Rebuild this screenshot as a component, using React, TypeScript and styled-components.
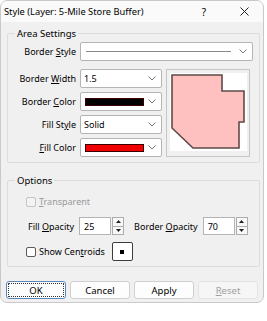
import React from "react";
import styled, { createGlobalStyle } from "styled-components";

const GlobalStyle = createGlobalStyle`
  html, body {
    margin: 0;
    background: #ffffff;
  }
  body {
    font-family: "Noto Sans", "DejaVu Sans", sans-serif;
    font-size: 9px;
    color: #000;
  }
`;

const Window = styled.div`
  width: 264px;
  height: 303px;
  box-sizing: border-box;
  border: 1px solid #c9c9c9;
  border-radius: 7px;
  overflow: hidden;
  background: #f0f0f0;
  display: flex;
  flex-direction: column;
`;

const TitleBar = styled.div`
  height: 21px;
  flex: none;
  background: #fafafa;
  display: flex;
  align-items: center;
  padding-left: 3px;
`;

const Title = styled.div`
  flex: 1;
  white-space: nowrap;
  font-size: 9.3px;
`;

const Help = styled.div`
  width: 12px;
  text-align: center;
  margin-right: 28px;
  font-size: 10px;
`;

const Close = styled.div`
  width: 12px;
  margin-right: 13px;
  display: flex;
  align-items: center;
  justify-content: center;
`;

const Body = styled.div`
  padding: 5px 3px 0 6px;
  display: flex;
  flex-direction: column;
`;

const Group = styled.fieldset<{ $gap?: number }>`
  margin: 0 0 ${(p) => p.$gap ?? 0}px 0;
  border: 1px solid #dcdcdc;
  border-radius: 2px;
  padding: 2px 6px 5px 4px;
  min-width: 0;

  legend {
    padding: 0 2px;
    margin-left: 3px;
    line-height: 13px;
    font-size: 9.5px;
  }
`;

const Row = styled.div`
  display: flex;
  align-items: center;
  height: 19px;
`;

const Label = styled.div`
  width: 64px;
  margin-right: 4px;
  text-align: right;
  white-space: nowrap;
`;

const Grid = styled.div`
  display: grid;
  grid-template-columns: 64px 82px 84px;
  grid-auto-rows: 19px;
  column-gap: 4px;
  row-gap: 4px;
  margin-top: 8px;
  align-items: center;
`;

const Combo = styled.div<{ $wide?: boolean }>`
  height: 19px;
  box-sizing: border-box;
  width: ${(p) => (p.$wide ? "173px" : "82px")};
  border: 1px solid #b4b4b4;
  border-radius: 2px;
  background: #fff;
  display: flex;
  align-items: center;
  padding: 0 5px 0 3px;
  gap: 4px;
`;

const ComboValue = styled.div`
  flex: 1;
  display: flex;
  align-items: center;
  white-space: nowrap;
`;

const LineSample = styled.div`
  flex: 1;
  height: 1px;
  background: #8a8a8a;
  margin-left: 2px;
  margin-right: 4px;
`;

const Swatch = styled.div<{ $color: string }>`
  width: 59px;
  height: 8px;
  margin-left: 1px;
  background: ${(p) => p.$color};
  border: 1px solid #3a0000;
  box-sizing: border-box;
`;

const Preview = styled.div`
  grid-column: 3;
  grid-row: 1 / span 4;
  align-self: stretch;
  box-sizing: border-box;
  border: 1px solid #c6c6c6;
  background: #f0f0f0;
  padding: 3px 3px 5px 3px;
  display: flex;
`;

const PreviewCanvas = styled.div`
  flex: 1;
  background: #fff;
  display: flex;
`;

const OptRow = styled.div<{ $top: number; $h: number }>`
  display: flex;
  align-items: center;
  height: ${(p) => p.$h}px;
  margin-top: ${(p) => p.$top}px;
  padding-left: 14px;
`;

const Check = styled.div<{ $disabled?: boolean }>`
  width: 10px;
  height: 10px;
  box-sizing: border-box;
  border: 1px solid ${(p) => (p.$disabled ? "#c4c4c4" : "#5a5a5a")};
  border-radius: 2px;
  background: ${(p) => (p.$disabled ? "#f3f3f3" : "#fff")};
  margin-right: 3px;
`;

const Text = styled.span<{ $disabled?: boolean; $ml?: number }>`
  color: ${(p) => (p.$disabled ? "#9a9a9a" : "#000")};
  margin-left: ${(p) => p.$ml ?? 0}px;
  white-space: nowrap;
`;

const SpinInput = styled.div<{ $ml: number }>`
  width: 32px;
  height: 18px;
  box-sizing: border-box;
  border: 1px solid #b4b4b4;
  background: #fff;
  margin-left: ${(p) => p.$ml}px;
  display: flex;
  align-items: center;
  padding-left: 4px;
`;

const Spinner = styled.div`
  width: 12px;
  height: 18px;
  box-sizing: border-box;
  margin-left: 1px;
  border: 1px solid #adadad;
  background: #f8f8f8;
  display: flex;
  flex-direction: column;
`;

const SpinHalf = styled.div<{ $down?: boolean }>`
  flex: 1;
  display: flex;
  align-items: center;
  justify-content: center;
  border-top: ${(p) => (p.$down ? "1px solid #adadad" : "none")};
`;

const SymbolButton = styled.div`
  width: 21px;
  height: 19px;
  box-sizing: border-box;
  margin-left: 7px;
  border: 1px solid #3c3c3c;
  border-radius: 2px;
  background: #fff;
  display: flex;
  align-items: center;
  justify-content: center;
`;

const Dot = styled.div`
  width: 4px;
  height: 4px;
  background: #000;
`;

const ButtonRow = styled.div`
  display: flex;
  gap: 4px;
  margin-top: 14px;
  margin-left: -1px;
`;

const Button = styled.div<{ $focused?: boolean; $disabled?: boolean }>`
  width: 60px;
  height: 18px;
  box-sizing: border-box;
  border: 1px solid ${(p) => (p.$focused ? "#5b86b8" : p.$disabled ? "#e4e4e4" : "#d0d0d0")};
  border-radius: 3px;
  background: ${(p) => (p.$disabled ? "#f6f6f6" : "#fdfdfd")};
  color: ${(p) => (p.$disabled ? "#a0a0a0" : "#000")};
  font-size: 9.5px;
  display: flex;
  align-items: center;
  justify-content: center;
  position: relative;

  ${(p) =>
    p.$focused &&
    `&::after {
      content: "";
      position: absolute;
      inset: 1px;
      border: 1px dotted #333;
      border-radius: 1px;
    }`}
`;

const Chevron = () => (
  <svg width="8" height="5" viewBox="0 0 8 5">
    <polyline points="0.5,0.5 4,4 7.5,0.5" fill="none" stroke="#777" strokeWidth="1" />
  </svg>
);

const Arrow = ({ down }: { down?: boolean }) => (
  <svg width="5" height="3" viewBox="0 0 5 3">
    <polygon points={down ? "0,0 5,0 2.5,3" : "0,3 5,3 2.5,0"} fill="#222" />
  </svg>
);

function ComboBox({ wide, children }: { wide?: boolean; children?: React.ReactNode }) {
  return (
    <Combo $wide={wide}>
      <ComboValue>{children}</ComboValue>
      <Chevron />
    </Combo>
  );
}

function Spin({ value, ml }: { value: string; ml: number }) {
  return (
    <>
      <SpinInput $ml={ml}>{value}</SpinInput>
      <Spinner>
        <SpinHalf>
          <Arrow />
        </SpinHalf>
        <SpinHalf $down>
          <Arrow down />
        </SpinHalf>
      </Spinner>
    </>
  );
}

export default function App() {
  return (
    <>
      <GlobalStyle />
      <Window>
        <TitleBar>
          <Title>Style (Layer: 5-Mile Store Buffer)</Title>
          <Help>?</Help>
          <Close>
            <svg width="9" height="9" viewBox="0 0 9 9">
              <path d="M0.5 0.5 L8.5 8.5 M8.5 0.5 L0.5 8.5" stroke="#222" strokeWidth="1" />
            </svg>
          </Close>
        </TitleBar>
        <Body>
          <Group $gap={11}>
            <legend>Area Settings</legend>
            <Row>
              <Label>
                Border <u>S</u>tyle
              </Label>
              <ComboBox wide>
                <LineSample />
              </ComboBox>
            </Row>
            <Grid>
              <Label>
                Border <u>W</u>idth
              </Label>
              <ComboBox>1.5</ComboBox>
              <Preview>
                <PreviewCanvas>
                  <svg width="77" height="77" viewBox="0 0 77 77">
                    <polygon
                      points="2,2 52,2 52,18 74,18 74,49 69,49 69,75 23,75 2,55"
                      fill="#ffc0c0"
                      stroke="#5e4a4a"
                      strokeWidth="1.6"
                    />
                  </svg>
                </PreviewCanvas>
              </Preview>
              <Label>
                Border <u>C</u>olor
              </Label>
              <ComboBox>
                <Swatch $color="#000" />
              </ComboBox>
              <Label>
                Fill St<u>y</u>le
              </Label>
              <ComboBox>Solid</ComboBox>
              <Label>
                <u>F</u>ill Color
              </Label>
              <ComboBox>
                <Swatch $color="#f00000" />
              </ComboBox>
            </Grid>
          </Group>
          <Group>
            <legend>Options</legend>
            <OptRow $top={6} $h={13}>
              <Check $disabled />
              <Text $disabled>
                <u>T</u>ransparent
              </Text>
            </OptRow>
            <OptRow $top={9} $h={18}>
              <Text $ml={2}>
                Fill <u>O</u>pacity
              </Text>
              <Spin value="25" ml={5} />
              <Text $ml={10}>
                Border <u>O</u>pacity
              </Text>
              <Spin value="70" ml={5} />
            </OptRow>
            <OptRow $top={7} $h={19}>
              <Check />
              <Text>
                Show Cen<u>t</u>roids
              </Text>
              <SymbolButton>
                <Dot />
              </SymbolButton>
            </OptRow>
          </Group>
          <ButtonRow>
            <Button $focused>OK</Button>
            <Button>Cancel</Button>
            <Button>Apply</Button>
            <Button $disabled>
              <span>
                <u>R</u>eset
              </span>
            </Button>
          </ButtonRow>
        </Body>
      </Window>
    </>
  );
}
